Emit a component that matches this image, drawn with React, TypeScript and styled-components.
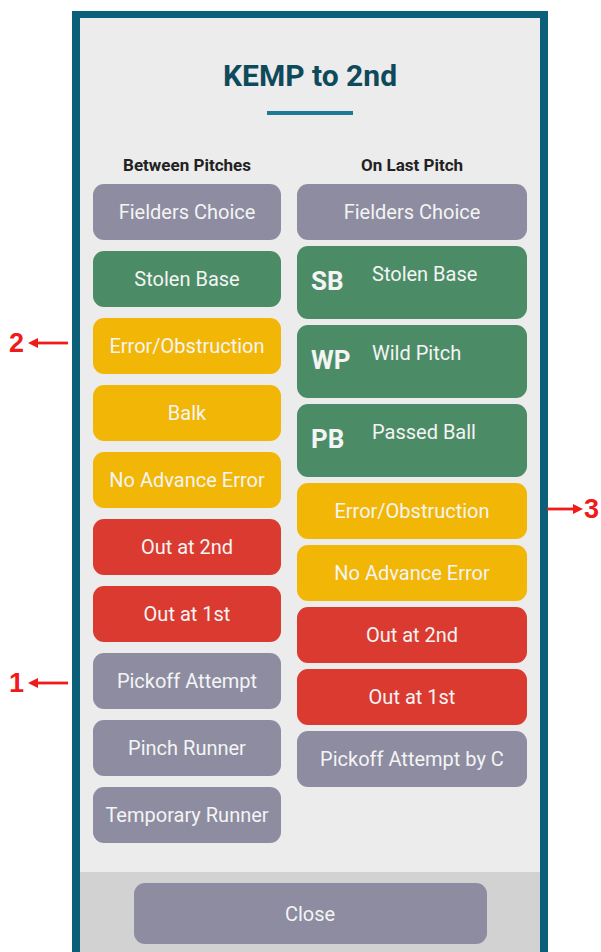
import React from 'react';
import styled, { createGlobalStyle } from 'styled-components';

const colors = {
  frame: '#0b5f79',
  panel: '#ececec',
  footer: '#d2d2d2',
  title: '#0f4a5b',
  rule: '#1b7b97',
  heading: '#222222',
  text: '#f4f4f4',
  mark: '#f01a1a',
};

const tones = {
  gray: '#8d8ca1',
  green: '#4b8c67',
  yellow: '#f2b706',
  red: '#db3a30',
};

type Tone = keyof typeof tones;

type Action = { label: string; tone: Tone; abbr?: string };

const betweenPitches: Action[] = [
  { label: 'Fielders Choice', tone: 'gray' },
  { label: 'Stolen Base', tone: 'green' },
  { label: 'Error/Obstruction', tone: 'yellow' },
  { label: 'Balk', tone: 'yellow' },
  { label: 'No Advance Error', tone: 'yellow' },
  { label: 'Out at 2nd', tone: 'red' },
  { label: 'Out at 1st', tone: 'red' },
  { label: 'Pickoff Attempt', tone: 'gray' },
  { label: 'Pinch Runner', tone: 'gray' },
  { label: 'Temporary Runner', tone: 'gray' },
];

const onLastPitch: Action[] = [
  { label: 'Fielders Choice', tone: 'gray' },
  { label: 'Stolen Base', tone: 'green', abbr: 'SB' },
  { label: 'Wild Pitch', tone: 'green', abbr: 'WP' },
  { label: 'Passed Ball', tone: 'green', abbr: 'PB' },
  { label: 'Error/Obstruction', tone: 'yellow' },
  { label: 'No Advance Error', tone: 'yellow' },
  { label: 'Out at 2nd', tone: 'red' },
  { label: 'Out at 1st', tone: 'red' },
  { label: 'Pickoff Attempt by C', tone: 'gray' },
];

const App = () => {
  return (
    <>
      <GlobalStyle />
      <Page>
        <Frame>
          <Header>
            <Title>KEMP to 2nd</Title>
            <Rule />
          </Header>
          <Columns>
            <ActionColumn title="Between Pitches" actions={betweenPitches} gap={11} />
            <ActionColumn title="On Last Pitch" actions={onLastPitch} gap={6} />
          </Columns>
          <Footer>
            <CloseButton type="button">Close</CloseButton>
          </Footer>
        </Frame>

        <Marker $top={328} $left={9}>
          <MarkNumber>2</MarkNumber>
          <Arrow direction="left" />
        </Marker>
        <Marker $top={668} $left={9}>
          <MarkNumber>1</MarkNumber>
          <Arrow direction="left" />
        </Marker>
        <Marker $top={494} $left={547}>
          <Arrow direction="right" />
          <MarkNumber>3</MarkNumber>
        </Marker>
      </Page>
    </>
  );
};

export default App;

const ActionColumn = ({ title, actions, gap }: { title: string; actions: Action[]; gap: number }) => (
  <Column>
    <ColumnTitle>{title}</ColumnTitle>
    <ButtonStack $gap={gap}>
      {actions.map((action) =>
        action.abbr ? (
          <TallButton key={action.label} type="button" $tone={action.tone}>
            <Abbr>{action.abbr}</Abbr>
            <TallLabel>{action.label}</TallLabel>
          </TallButton>
        ) : (
          <ActionButton key={action.label} type="button" $tone={action.tone}>
            {action.label}
          </ActionButton>
        )
      )}
    </ButtonStack>
  </Column>
);

const Arrow = ({ direction }: { direction: 'left' | 'right' }) =>
  direction === 'left' ? (
    <svg width="40" height="10" viewBox="0 0 40 10">
      <polygon points="0,5 10,0 10,10" fill={colors.mark} />
      <rect x="9" y="3.6" width="31" height="2.8" fill={colors.mark} />
    </svg>
  ) : (
    <svg width="36" height="10" viewBox="0 0 36 10">
      <polygon points="36,5 26,0 26,10" fill={colors.mark} />
      <rect x="0" y="3.6" width="27" height="2.8" fill={colors.mark} />
    </svg>
  );

const GlobalStyle = createGlobalStyle`
  html, body {
    margin: 0;
    padding: 0;
    overflow: hidden;
    background: #ffffff;
    font-family: Roboto, 'Liberation Sans', sans-serif;
  }
`;

const Page = styled.main`
  position: relative;

  height: 952px;
  padding: 11px 0 0 72px;
  box-sizing: border-box;
  overflow: hidden;
`;

const Frame = styled.section`
  width: 476px;
  box-sizing: border-box;

  border: 8px solid ${colors.frame};
  border-top-width: 7px;

  background: ${colors.panel};
`;

const Header = styled.header`
  display: flex;
  flex-direction: column;
  align-items: center;

  padding-top: 40px;
`;

const Title = styled.h1`
  margin: 0;

  font-size: 30px;
  font-weight: 700;
  line-height: 36px;

  color: ${colors.title};
`;

const Rule = styled.div`
  width: 86px;
  height: 4px;
  margin-top: 17px;

  background: ${colors.rule};
`;

const Columns = styled.div`
  display: grid;
  grid-template-columns: 188px 230px;
  column-gap: 16px;
  align-items: start;

  margin-top: 41px;
  padding: 0 13px;
`;

const Column = styled.div`
  display: flex;
  flex-direction: column;
  gap: 10px;
`;

const ColumnTitle = styled.h2`
  margin: 0;

  font-size: 17px;
  font-weight: 700;
  line-height: 18px;
  text-align: center;

  color: ${colors.heading};
`;

const ButtonStack = styled.div<{ $gap: number }>`
  display: flex;
  flex-direction: column;
  gap: ${(p) => p.$gap}px;
`;

const ActionButton = styled.button<{ $tone: Tone }>`
  height: 56px;
  padding: 0 4px;

  border: none;
  border-radius: 11px;

  font-family: Roboto, 'Liberation Sans', sans-serif;
  font-size: 20px;
  font-weight: 400;
  white-space: nowrap;

  color: ${colors.text};
  background: ${(p) => tones[p.$tone]};
`;

const TallButton = styled(ActionButton)`
  display: flex;
  align-items: flex-start;

  height: 73px;
  padding: 0 0 0 14px;
`;

const Abbr = styled.span`
  width: 61px;

  font-size: 26px;
  font-weight: 700;
  line-height: 70px;
  text-align: left;
`;

const TallLabel = styled.span`
  line-height: 56px;
`;

const Footer = styled.footer`
  display: flex;
  justify-content: center;

  margin-top: 29px;
  padding: 11px 0 40px;

  background: ${colors.footer};
`;

const CloseButton = styled.button`
  width: 353px;
  height: 61px;

  border: none;
  border-radius: 11px;

  font-family: Roboto, 'Liberation Sans', sans-serif;
  font-size: 20px;

  color: ${colors.text};
  background: ${tones.gray};
`;

const Marker = styled.div<{ $top: number; $left: number }>`
  position: absolute;
  top: ${(p) => p.$top}px;
  left: ${(p) => p.$left}px;

  display: flex;
  align-items: center;
  gap: 4px;
  height: 30px;

  & > svg + span {
    margin-left: -3px;
  }
`;

const MarkNumber = styled.span`
  font-family: 'Liberation Sans', Arial, sans-serif;
  font-size: 27px;
  font-weight: 700;
  line-height: 30px;

  color: ${colors.mark};
`;
